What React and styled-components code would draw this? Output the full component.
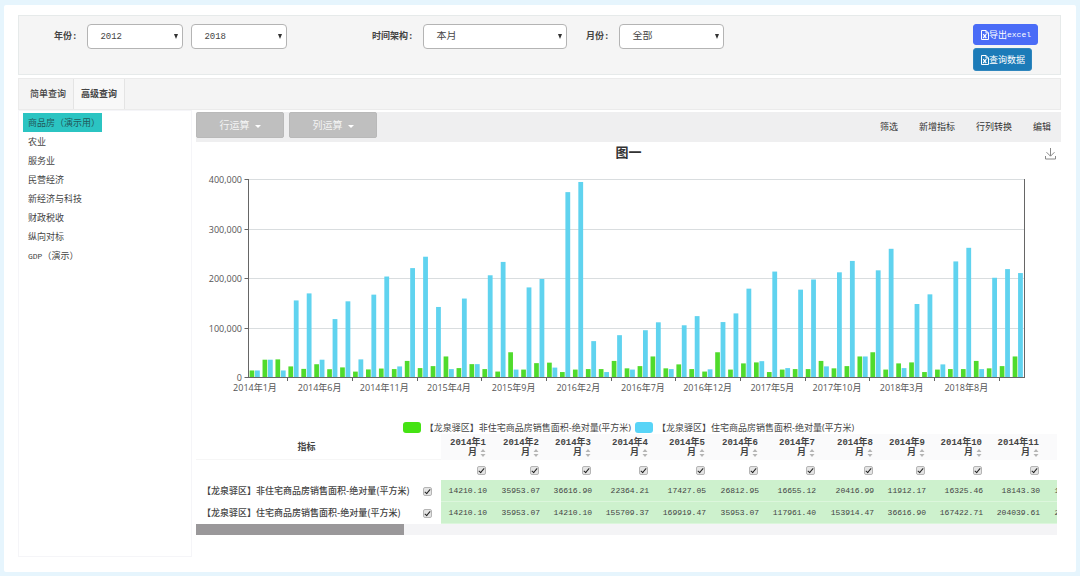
import React from 'react';
import styled, { createGlobalStyle, css } from 'styled-components';

const GlobalStyle = createGlobalStyle`
  *, *::before, *::after { box-sizing: border-box; }
  body {
    margin: 0;
    background: #e6f5fd;
    color: #444;
    font: 9px/12px "Noto Sans CJK SC", sans-serif;
  }
  button, select { font: inherit; color: inherit; }
`;

const mono = css`
  font-family: "Liberation Mono", "Noto Sans CJK SC", monospace;
`;

const Page = styled.div`
  display: flex;
  flex-direction: column;
  min-height: 100vh;
  padding: 5px 4px 4px;
`;

const Card = styled.div`
  flex: 1;
  display: flex;
  flex-direction: column;
  min-width: 0;
  padding: 10px 15px 15px 14px;
  background: #fff;
  border-radius: 2px;
`;

const Filters = styled.form`
  display: grid;
  grid-template-columns: 318fr 214fr 387fr 87fr;
  height: 60px;
  padding: 8px 0 0 35px;
  background: #f5f5f5;
  border: 1px solid #e6eaea;
`;

const FilterGroup = styled.div`
  display: flex;
  align-items: center;
  align-self: start;
  gap: 8px;
`;

const FilterLabel = styled.label`
  ${mono}
  margin-right: 2px;
  font-weight: bold;
  white-space: nowrap;
`;

const SelectBox = styled.span`
  position: relative;
  width: ${(p) => p.$width}px;
  &::after {
    content: '';
    position: absolute;
    right: 5px;
    top: 10px;
    border: 2px solid transparent;
    border-top: 5px solid #333;
    border-bottom: 0;
    pointer-events: none;
  }
`;

const Select = styled.select`
  ${mono}
  display: block;
  width: 100%;
  height: 25px;
  padding: 0 12px;
  appearance: none;
  background: #fff;
  border: 1px solid #b4b4b4;
  border-radius: 4px;
  font-size: ${(p) => (p.$numeric ? 9 : 10)}px;
`;

const Actions = styled.div`
  display: flex;
  flex-direction: column;
  align-items: flex-start;
  gap: 3px;
`;

const ActionButton = styled.button`
  display: flex;
  align-items: center;
  height: ${(p) => (p.$primary ? 21 : 23)}px;
  padding: 0 6px 0 7px;
  border: 1px solid ${(p) => (p.$primary ? '#4a6cf7' : '#2f86bd')};
  border-radius: 3px;
  background: ${(p) => (p.$primary ? '#4a6cf7' : '#1c7bb8')};
  color: #fff;
  white-space: nowrap;
`;

const Latin = styled.span`
  font: 8px "Liberation Mono", monospace;
`;

const Tabs = styled.nav`
  display: flex;
  height: 32px;
  margin-top: 3px;
  background: #f4f4f4;
  border: 1px solid #ebebeb;
`;

const Tab = styled.button`
  padding: 0 7px;
  padding-left: ${(p) => (p.$active ? 7 : 11)}px;
  border: 0;
  border-right: 1px solid #e4e4e4;
  background: ${(p) => (p.$active ? '#f8f8f8' : 'none')};
  font-weight: ${(p) => (p.$active ? 700 : 500)};
`;

const Body = styled.div`
  flex: 1;
  display: flex;
  gap: 4px;
  min-width: 0;
`;

const Sidebar = styled.ul`
  flex: 0 0 174px;
  margin: 0;
  padding: 2px 4px;
  list-style: none;
  border: 1px solid #f5f5f8;
`;

const Item = styled.li`
  height: 19px;
`;

const ItemLink = styled.a`
  display: inline-block;
  padding: 0 2px 0 5px;
  line-height: 19px;
  color: ${(p) => (p.$active ? '#22595b' : '#444')};
  background: ${(p) => (p.$active ? '#2bc4c2' : 'none')};
  text-decoration: none;
`;

const Content = styled.main`
  flex: 1;
  min-width: 0;
  padding-top: 2px;
`;

const Toolbar = styled.div`
  display: flex;
  gap: 5px;
  height: 30px;
  padding-right: 10px;
  background: #efeff0;
`;

const MenuButton = styled.button`
  display: flex;
  align-items: center;
  justify-content: center;
  gap: 5px;
  width: 88px;
  height: 26px;
  border: 1px solid #b9b9b9;
  border-radius: 2px;
  background: #bfbfbf;
  color: #f4f4f4;
  font-size: 10px;
  &::after {
    content: '';
    margin-top: 3px;
    border: 3px solid transparent;
    border-top-color: #fff;
    border-bottom: 0;
  }
`;

const Links = styled.div`
  display: flex;
  align-items: center;
  gap: 21px;
  margin-left: auto;
`;

const ToolLink = styled.a`
  color: #333;
  text-decoration: none;
`;

const TitleRow = styled.div`
  display: grid;
  grid-template-columns: 1fr auto 1fr;
  align-items: center;
  height: 20px;
`;

const Title = styled.h1`
  grid-column: 2;
  margin: 0;
  font-size: 13px;
  line-height: 20px;
  color: #333;
`;

const IconButton = styled.button`
  justify-self: end;
  display: flex;
  margin: 3px 4px 0 0;
  padding: 0;
  border: 0;
  background: none;
`;

const ChartSvg = styled.svg`
  display: block;
  width: 100%;
  height: auto;
  text {
    font: 9px "Open Sans", "Noto Sans CJK SC", sans-serif;
    fill: #555;
  }
`;

const Legend = styled.div`
  display: flex;
  justify-content: center;
  gap: 4px;
  height: 14px;
  padding-top: 1px;
  font-family: "Open Sans", "Noto Sans CJK SC", sans-serif;
`;

const LegendItem = styled.span`
  display: flex;
  align-items: center;
  gap: 4px;
  white-space: nowrap;
`;

const Swatch = styled.i`
  width: 18px;
  height: 11px;
  border-radius: 3px;
  background: ${(p) => p.$color};
`;

const TableView = styled.div`
  margin-right: 4px;
  overflow: hidden;
`;

const Table = styled.table`
  width: 0;
  min-width: 902px;
  table-layout: fixed;
  border-collapse: separate;
  border-spacing: 0;
  td, th { padding: 0; }
`;

const HeadRow = styled.tr`
  height: 26px;
`;

const NameHead = styled.th`
  border-bottom: 1px solid #f6f6f6;
  font-size: 9px;
`;

const MonthHead = styled.th`
  ${mono}
  && { padding: 1px 7px 0 0; }
  background: #fafafb;
  text-align: right;
  line-height: 10px;
`;

const MonthUnit = styled.span`
  display: flex;
  align-items: center;
  justify-content: flex-end;
  gap: 3px;
`;

const CheckRow = styled.tr`
  height: 20px;
`;

const CheckCell = styled.td`
  && { padding-right: ${(p) => (p.$name ? 9 : 7)}px; }
  text-align: right;
  line-height: 0;
`;

const DataRow = styled.tr`
  height: 22px;
`;

const RowName = styled.th`
  && { padding-left: 6px; }
  font-weight: 500;
  text-align: left;
  white-space: nowrap;
`;

const Value = styled.td`
  && { padding-right: 6px; }
  border-bottom: 1px solid #dcf6dc;
  background: #cdf1cd;
  font: 8px "Liberation Mono", monospace;
  text-align: right;
`;

const Check = styled.input.attrs({ type: 'checkbox', defaultChecked: true })`
  appearance: none;
  position: relative;
  width: 9px;
  height: 9px;
  margin: 0;
  border: 1px solid #b5b5b5;
  border-radius: 2px;
  background: #e4e4e4;
  &:checked::after {
    content: '';
    position: absolute;
    left: 2px;
    top: 0;
    width: 3px;
    height: 6px;
    border: solid #222;
    border-width: 0 1px 1px 0;
    transform: rotate(40deg);
  }
`;

const ScrollTrack = styled.div`
  height: 11px;
  background: #f4f4f6;
`;

const ScrollThumb = styled.div`
  width: 24%;
  min-width: 208px;
  height: 11px;
  background: #9a989a;
`;

const GREEN = '#45e313';
const BLUE = '#58d4f7';

const nonResidential = [
  14.21, 35.95, 36.6, 22.4, 17.4, 26.8, 16.7, 20.4, 11.9, 16.3, 18.1, 17, 33.5, 19, 23, 42.5, 19, 27, 17, 12,
  51, 16, 29, 30, 11, 16, 17, 17, 33.5, 18.5, 23, 42.5, 18.5, 26.5, 17, 12, 51, 16, 28.5, 30.5,
  11, 16, 17, 17, 33.5, 18.5, 23, 42.5, 51, 16, 28.5, 30.5, 11, 16, 17, 17, 33.5, 18.5, 23, 42.5,
];
const residential = [
  14.21, 35.95, 14.21, 155.7, 169.9, 35.95, 118, 153.9, 36.6, 167.4, 204, 22.4, 221, 244, 142.5, 17, 159.5, 27, 206.5, 233.5,
  16, 182, 199, 20, 374.5, 395, 73.5, 11, 85.5, 16, 95.5, 111.5, 17, 105.5, 124, 16.5, 112, 129.5, 179.5, 33,
  214, 19, 177.5, 198, 22.5, 212.5, 235.5, 42.5, 216.5, 260, 19, 148.5, 168, 26.5, 234.5, 262, 17, 201.5, 219, 211,
];

const tickLabels = [
  '2014年1月', '2014年6月', '2014年11月', '2015年4月', '2015年9月', '2016年2月',
  '2016年7月', '2016年12月', '2017年5月', '2017年10月', '2018年3月', '2018年8月',
];
const yLabels = ['0', '100,000', '200,000', '300,000', '400,000'];

const columns = [
  [52, '14210.10', '14210.10'],
  [53, '35953.07', '35953.07'],
  [52, '36616.90', '14210.10'],
  [57, '22364.21', '155709.37'],
  [57, '17427.05', '169919.47'],
  [53, '26812.95', '35953.07'],
  [57, '16655.12', '117961.40'],
  [58, '20416.99', '153914.47'],
  [52, '11912.17', '36616.90'],
  [57, '16325.46', '167422.71'],
  [57, '18143.30', '204039.61'],
  [53, '17043.22', '22364.21'],
];

const monthHeads = columns.slice(0, 11);

const rowNames = [
  '【龙泉驿区】非住宅商品房销售面积-绝对量(平方米)',
  '【龙泉驿区】住宅商品房销售面积-绝对量(平方米)',
];

const menu = ['商品房（演示用）', '农业', '服务业', '民营经济', '新经济与科技', '财政税收', '纵向对标'];

function ExcelIcon() {
  return (
    <svg width="8" height="10" viewBox="0 0 8 10" fill="none" stroke="#fff" aria-hidden="true">
      <path d="M.5 .5H5L7.5 3V9.5H.5ZM5 .5V3H7.5" />
      <path d="M2.2 4.2L5.3 8M5.3 4.2L2.2 8" strokeWidth="1.2" />
    </svg>
  );
}

function SortIcon() {
  return (
    <svg width="6" height="8" viewBox="0 0 6 8" fill="#b5b5b5" aria-hidden="true">
      <path d="M3 0L5.5 3H.5ZM3 8L.5 5H5.5Z" />
    </svg>
  );
}

function Chart() {
  const left = 52.5;
  const base = 215.5;
  const step = 776 / 60;
  const unit = 198 / 400;
  return (
    <ChartSvg viewBox="0 0 865 258" role="img" aria-label="图一">
      {yLabels.map((label, i) => {
        const y = Math.floor(base - i * 49.5) + 0.5;
        return (
          <g key={label}>
            {i > 0 && <path d={`M${left} ${y}H828.5`} stroke="#d9dddf" />}
            <path d={`M${left - 4} ${y}H${left}`} stroke="#666" />
            <text x="46" y={y + 3} textAnchor="end">{label}</text>
          </g>
        );
      })}
      {nonResidential.map((v, i) => (
        <g key={i}>
          <rect x={left + i * step + 1.1} y={base - v * unit} width="4.7" height={v * unit} fill="#50db2c" />
          <rect
            x={left + i * step + 6.5}
            y={base - residential[i] * unit}
            width="4.8"
            height={residential[i] * unit}
            fill="#60d3ef"
          />
        </g>
      ))}
      <path d="M52.5 17V216M828.5 17V216M52 215.5H829" stroke="#666" fill="none" />
      {tickLabels.map((label, i) => (
        <g key={label}>
          <path d={`M${Math.round(left + (i * 5 + 3) * step) + 0.5} 216V219`} stroke="#666" />
          <text x={left + (i * 5 + 0.5) * step} y="229" textAnchor="middle">{label}</text>
        </g>
      ))}
    </ChartSvg>
  );
}

function Dropdown({ id, value, width, numeric, label }) {
  return (
    <SelectBox $width={width}>
      <Select id={id} aria-label={label} $numeric={numeric} defaultValue={value}>
        <option>{value}</option>
      </Select>
    </SelectBox>
  );
}

export default function App() {
  return (
    <Page>
      <GlobalStyle />
      <Card>
        <Filters>
          <FilterGroup>
            <FilterLabel htmlFor="from">年份:</FilterLabel>
            <Dropdown id="from" value="2012" width={96} numeric />
            <Dropdown id="to" value="2018" width={96} numeric label="结束年份" />
          </FilterGroup>
          <FilterGroup>
            <FilterLabel htmlFor="frame">时间架构:</FilterLabel>
            <Dropdown id="frame" value="本月" width={144} />
          </FilterGroup>
          <FilterGroup>
            <FilterLabel htmlFor="month">月份:</FilterLabel>
            <Dropdown id="month" value="全部" width={105} />
          </FilterGroup>
          <Actions>
            <ActionButton type="button" $primary><ExcelIcon />导出<Latin>excel</Latin></ActionButton>
            <ActionButton type="button"><ExcelIcon />查询数据</ActionButton>
          </Actions>
        </Filters>
        <Tabs>
          <Tab type="button">简单查询</Tab>
          <Tab type="button" $active>高级查询</Tab>
        </Tabs>
        <Body>
          <Sidebar>
            {menu.map((name, i) => (
              <Item key={name}><ItemLink href="#" $active={i === 0}>{name}</ItemLink></Item>
            ))}
            <Item><ItemLink href="#"><Latin>GDP</Latin>（演示）</ItemLink></Item>
          </Sidebar>
          <Content>
            <Toolbar>
              <MenuButton type="button">行运算</MenuButton>
              <MenuButton type="button">列运算</MenuButton>
              <Links>
                {['筛选', '新增指标', '行列转换', '编辑'].map((t) => <ToolLink href="#" key={t}>{t}</ToolLink>)}
              </Links>
            </Toolbar>
            <TitleRow>
              <Title>图一</Title>
              <IconButton type="button" aria-label="下载">
                <svg width="13" height="13" viewBox="0 0 13 13" fill="none" stroke="#888">
                  <path d="M6.5 1V9M2.5 5.2L6.5 9.2L10.5 5.2M1.5 9V12H11.5V9" />
                </svg>
              </IconButton>
            </TitleRow>
            <Chart />
            <Legend>
              <LegendItem><Swatch $color={GREEN} />{rowNames[0]}</LegendItem>
              <LegendItem><Swatch $color={BLUE} />{rowNames[1]}</LegendItem>
            </Legend>
            <TableView>
              <Table>
                <colgroup>
                  <col style={{ width: 221 }} />
                  <col style={{ width: 24 }} />
                  {columns.map(([w], i) => <col key={i} style={{ width: w }} />)}
                </colgroup>
                <thead>
                  <HeadRow>
                    <NameHead>指标</NameHead>
                    <NameHead />
                    {monthHeads.map((c, i) => (
                      <MonthHead key={i}>
                        2014年{i + 1}
                        <MonthUnit>月<SortIcon /></MonthUnit>
                      </MonthHead>
                    ))}
                    <MonthHead />
                  </HeadRow>
                </thead>
                <tbody>
                  <CheckRow>
                    <td />
                    <td />
                    {monthHeads.map((c, i) => (
                      <CheckCell key={i}><Check aria-label={`2014年${i + 1}月`} /></CheckCell>
                    ))}
                    <td />
                  </CheckRow>
                  {rowNames.map((name, r) => (
                    <DataRow key={name}>
                      <RowName scope="row"><label htmlFor={`row${r}`}>{name}</label></RowName>
                      <CheckCell $name><Check id={`row${r}`} /></CheckCell>
                      {columns.map((c, i) => <Value key={i}>{c[r + 1]}</Value>)}
                    </DataRow>
                  ))}
                </tbody>
              </Table>
              <ScrollTrack><ScrollThumb /></ScrollTrack>
            </TableView>
          </Content>
        </Body>
      </Card>
    </Page>
  );
}
